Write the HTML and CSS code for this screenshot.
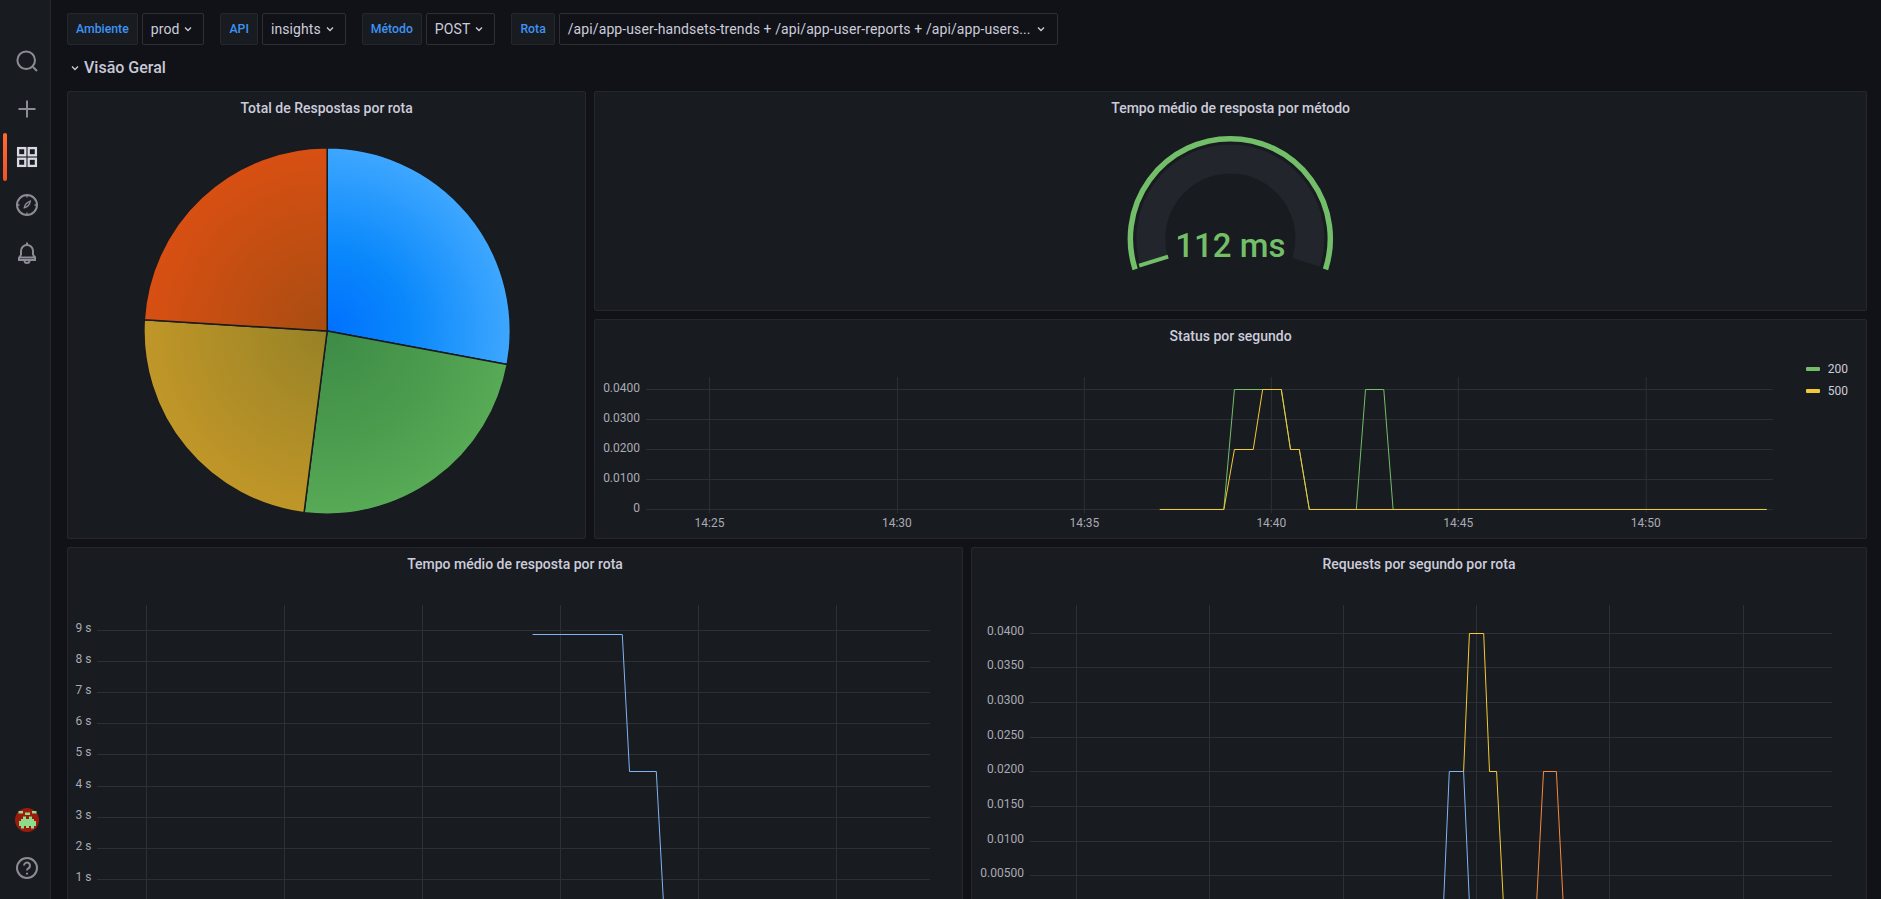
FILE: index.html
```html
<!DOCTYPE html>
<html lang="pt">
<head>
<meta charset="utf-8">
<title>Visão Geral</title>
<link rel="stylesheet" href="styles.css">
</head>
<body>
<nav class="sidebar">
  <div class="nav-top">
    <a class="nav-item">
      <svg class="icon" viewBox="0 0 24 24"><circle cx="11.2" cy="11.2" r="8.8"/><path d="M18 18l4 4"/></svg>
    </a>
    <a class="nav-item">
      <svg class="icon" viewBox="0 0 24 24"><path d="M12 3.500v17M3.500 12h17"/></svg>
    </a>
    <a class="nav-item active">
      <svg class="icon" viewBox="0 0 24 24"><rect x="3.100" y="3.100" width="7.200" height="7.200"/><rect x="13.700" y="3.100" width="7.200" height="7.200"/><rect x="3.100" y="13.700" width="7.200" height="7.200"/><rect x="13.700" y="13.700" width="7.200" height="7.200"/></svg>
    </a>
    <a class="nav-item">
      <svg class="icon" viewBox="0 0 24 24"><circle cx="12" cy="12" r="10"/><path d="M9.300 14.700c.5-2.800 2-5 6-6.500-.6 3.800-2.600 5.800-6 6.500z" class="thin"/><path d="M12 2v2.500M12 19.500V22M2 12h2.500M19.500 12H22" class="thin"/></svg>
    </a>
    <a class="nav-item">
      <svg class="icon" viewBox="0 0 24 24"><path d="M12 1.500v2.500M6 14v-4a6 6 0 0 1 12 0v4M6 14l-2 2.800v2.200h16v-2.800L18 14M4 16.500h16M9.500 19.500a2.500 2.500 0 0 0 5 0"/></svg>
    </a>
  </div>
  <div class="nav-bottom">
    <a class="nav-item">
      <svg class="avatar" viewBox="0 0 24 24">
        <circle class="avatar-bg" cx="12" cy="12" r="12"/>
        <path class="avatar-fg" d="M3.500 3h4.500v2.500h-4.500zM10 4.500h5v2.500h-5zM17 3h4.500v2.500h-4.500zM4 13h2v-2h2v-2.500h3v2.500h3v-2.500h3v2.500h2v2h2v5h-2v2.500h-3v-2.500h-2v2h-3v-2h-2v2.500h-3v-2.500h-2z"/>
      </svg>
    </a>
    <a class="nav-item">
      <svg class="icon" viewBox="0 0 24 24"><circle cx="12" cy="12" r="10"/><path d="M9 9.600a3 3 0 1 1 4.600 2.500c-1 .6-1.600 1.100-1.600 2.300"/><path d="M12 16.800v1.800"/></svg>
    </a>
  </div>
</nav>

<main class="main">
  <div class="toolbar">
    <div class="var-group">
      <span class="var-label">Ambiente</span>
      <span class="var-select">prod<svg class="chev" viewBox="0 0 8 6"><path d="M1 1.500l3 3 3-3"/></svg></span>
    </div>
    <div class="var-group">
      <span class="var-label">API</span>
      <span class="var-select">insights<svg class="chev" viewBox="0 0 8 6"><path d="M1 1.500l3 3 3-3"/></svg></span>
    </div>
    <div class="var-group">
      <span class="var-label">Método</span>
      <span class="var-select">POST<svg class="chev" viewBox="0 0 8 6"><path d="M1 1.500l3 3 3-3"/></svg></span>
    </div>
    <div class="var-group">
      <span class="var-label">Rota</span>
      <span class="var-select route-select">/api/app-user-handsets-trends + /api/app-user-reports + /api/app-users...<svg class="chev" viewBox="0 0 8 6"><path d="M1 1.500l3 3 3-3"/></svg></span>
    </div>
  </div>

  <h2 class="row-title"><svg class="chev" viewBox="0 0 8 6"><path d="M1 1.500l3 3 3-3"/></svg>Visão Geral</h2>

  <div class="dash-grid">
    <section class="panel pie-panel">
      <h3 class="panel-title">Total de Respostas por rota</h3>
      <svg class="chart pie-chart" viewBox="68 124 517 414">
        <defs>
          <radialGradient id="g-blue" gradientUnits="userSpaceOnUse" cx="327" cy="331" r="183">
            <stop offset="0" stop-color="#0070ff"/><stop offset=".45" stop-color="#0a88fb"/><stop offset="1" stop-color="#3ea7ff"/>
          </radialGradient>
          <radialGradient id="g-green" gradientUnits="userSpaceOnUse" cx="327" cy="331" r="183">
            <stop offset="0" stop-color="#3d8b47"/><stop offset=".6" stop-color="#4c9c4e"/><stop offset="1" stop-color="#57aa56"/>
          </radialGradient>
          <radialGradient id="g-yellow" gradientUnits="userSpaceOnUse" cx="327" cy="331" r="183">
            <stop offset="0" stop-color="#978226"/><stop offset="1" stop-color="#c09628"/>
          </radialGradient>
          <radialGradient id="g-orange" gradientUnits="userSpaceOnUse" cx="327" cy="331" r="183">
            <stop offset="0" stop-color="#a84d12"/><stop offset="1" stop-color="#d84f12"/>
          </radialGradient>
        </defs>
        <path class="slice" fill="url(#g-blue)" d="M327 331V147.800A183.200 183.200 0 0 1 507.100 364.400z"/>
        <path class="slice" fill="url(#g-green)" d="M327 331L507.100 364.400A183.200 183.200 0 0 1 303.900 512.700z"/>
        <path class="slice" fill="url(#g-yellow)" d="M327 331L303.900 512.700A183.200 183.200 0 0 1 144.100 319.800z"/>
        <path class="slice" fill="url(#g-orange)" d="M327 331L144.100 319.800A183.200 183.200 0 0 1 327 147.800z"/>
      </svg>
    </section>

    <section class="panel gauge-panel">
      <h3 class="panel-title">Tempo médio de resposta por método</h3>
      <svg class="chart" viewBox="595 124 1271 186">
        <path class="gauge-track" d="M1154.700 262.500A79.500 79.500 0 1 1 1306.300 262.500"/>
        <path class="gauge-threshold" d="M1135.300 269.300A100 100 0 1 1 1325.700 269.300"/>
        <path class="gauge-value" d="M1139.300 265.700L1168.300 256.700"/>
        <text class="gauge-text" x="1230.500" y="257.500">112 ms</text>
      </svg>
    </section>

    <section class="panel status-panel">
      <h3 class="panel-title">Status por segundo</h3>
      <div class="chart-wrap">
        <svg class="chart" viewBox="595 352 1271 186">
          <path class="grid" d="M646 389.500H1773M646 419.500H1773M646 449.500H1773M646 479.500H1773M646 509.500H1773M709.500 377V513M897.500 377V513M1084.500 377V513M1271.500 377V513M1458.500 377V513M1646.500 377V513"/>
          <g class="axis-y">
            <text x="640" y="392">0.0400</text>
            <text x="640" y="422">0.0300</text>
            <text x="640" y="452">0.0200</text>
            <text x="640" y="482">0.0100</text>
            <text x="640" y="512">0</text>
          </g>
          <g class="axis-x">
            <text x="709.500" y="527">14:25</text>
            <text x="897" y="527">14:30</text>
            <text x="1084.500" y="527">14:35</text>
            <text x="1271.500" y="527">14:40</text>
            <text x="1458.500" y="527">14:45</text>
            <text x="1646" y="527">14:50</text>
          </g>
          <path class="series s-green" d="M1160 509.500H1224L1234.600 389.500H1281.500L1290.700 449.500H1299.500L1309.500 509.500H1356.500L1365.700 389.500H1384L1393.300 509.500H1767"/>
          <path class="series s-yellow" d="M1160 509.500H1224L1234.600 449.500H1253.400L1262.800 389.500H1281.500L1290.700 449.500H1299.500L1309.500 509.500H1767"/>
        </svg>
        <ul class="legend">
          <li class="legend-item"><i class="swatch swatch-green"></i>200</li>
          <li class="legend-item"><i class="swatch swatch-yellow"></i>500</li>
        </ul>
      </div>
    </section>

    <section class="panel latency-panel">
      <h3 class="panel-title">Tempo médio de resposta por rota</h3>
      <svg class="chart" viewBox="68 580 894 414">
        <path class="grid" d="M97 630.500H930M97 661.500H930M97 692.500H930M97 723.500H930M97 754.500H930M97 786.500H930M97 817.500H930M97 848.500H930M97 879.500H930M146.500 605V915M284.500 605V915M422.500 605V915M560.500 605V915M698.500 605V915M836.500 605V915"/>
        <g class="axis-y">
          <text x="91.500" y="632">9 s</text>
          <text x="91.500" y="663">8 s</text>
          <text x="91.500" y="694">7 s</text>
          <text x="91.500" y="725">6 s</text>
          <text x="91.500" y="756">5 s</text>
          <text x="91.500" y="788">4 s</text>
          <text x="91.500" y="819">3 s</text>
          <text x="91.500" y="850">2 s</text>
          <text x="91.500" y="881">1 s</text>
        </g>
        <path class="series s-blue" d="M532.600 634.500H622.300L629.500 771.500H656.300L663.600 905"/>
      </svg>
    </section>

    <section class="panel rps-panel">
      <h3 class="panel-title">Requests por segundo por rota</h3>
      <svg class="chart" viewBox="972 580 894 414">
        <path class="grid" d="M1030 633.500H1832M1030 667.500H1832M1030 702.500H1832M1030 737.500H1832M1030 771.500H1832M1030 806.500H1832M1030 841.500H1832M1030 875.500H1832M1076.500 605V915M1209.500 605V915M1343.500 605V915M1476.500 605V915M1609.500 605V915M1743.500 605V915"/>
        <g class="axis-y">
          <text x="1024" y="635">0.0400</text>
          <text x="1024" y="669">0.0350</text>
          <text x="1024" y="704">0.0300</text>
          <text x="1024" y="739">0.0250</text>
          <text x="1024" y="773">0.0200</text>
          <text x="1024" y="808">0.0150</text>
          <text x="1024" y="843">0.0100</text>
          <text x="1024" y="877">0.00500</text>
        </g>
        <path class="series s-blue" d="M1443.500 905L1449.300 771.500H1463.600L1469.500 905"/>
        <path class="series s-orange" d="M1536.500 905L1543.500 771.500H1556.400L1563.300 905"/>
        <path class="series s-yellow" d="M1463.600 771.500L1469.400 633.500H1483.700L1489.500 771.500H1496.600L1503.500 905"/>
      </svg>
    </section>
  </div>
</main>
</body>
</html>
```
FILE: styles.css
```css
* { box-sizing: border-box; }

html, body {
  height: 100%;
  margin: 0;
}

body {
  display: flex;
  overflow: hidden;
  background: #111217;
  color: #ccccdc;
  font-family: Roboto, "Liberation Sans", sans-serif;
  font-size: 14px;
}

/* Sidebar */
.sidebar {
  flex: 0 0 51px;
  height: 899px;
  display: flex;
  flex-direction: column;
  justify-content: space-between;
  background: #181b1f;
  border-right: 1px solid #24272b;
}

.nav-top { padding-top: 36px; }
.nav-bottom { padding-bottom: 7px; }

.nav-item {
  position: relative;
  display: flex;
  align-items: center;
  justify-content: center;
  height: 48px;
  padding-left: 4px;
}

.nav-item:first-child { height: 49px; }

.nav-item.active::before {
  content: "";
  position: absolute;
  left: 3px;
  top: 0;
  width: 4px;
  height: 48px;
  border-radius: 2px;
  background: linear-gradient(180deg, #ff6a30, #f0532c);
}

.icon {
  width: 24px;
  height: 24px;
  fill: none;
  stroke: #8b8c96;
  stroke-width: 2;
}

.icon .thin { stroke-width: 1.4; }

.active .icon {
  stroke: #d8d9e3;
  stroke-width: 2.300;
}

.avatar {
  width: 24px;
  height: 24px;
}

.avatar-bg { fill: #9c1a0c; }
.avatar-fg { fill: #8edb8c; }

/* Toolbar */
.main {
  flex: 1;
  min-width: 0;
  padding: 13px 14px 0 16px;
}

.toolbar {
  display: flex;
  gap: 16px;
}

.var-group {
  display: flex;
  gap: 4px;
}

.var-label,
.var-select {
  display: flex;
  align-items: center;
  height: 32px;
  border-radius: 2px;
  white-space: nowrap;
}

.var-label {
  padding: 0 8px;
  background: #181b1f;
  border: 1px solid #24272b;
  color: #3d93f5;
  font-size: 12.250px;
  font-weight: 500;
}

.var-select {
  padding: 0 11px 0 8px;
  background: #111217;
  border: 1px solid #2c2f34;
  color: #ccccdc;
  letter-spacing: .1px;
}

.route-select { padding-right: 12px; }
.route-select .chev { margin-left: 6px; }

.chev {
  flex: none;
  width: 8px;
  height: 6px;
  margin-left: 5px;
  fill: none;
  stroke: #ccccdc;
  stroke-width: 1.300;
}

/* Row heading */
.row-title {
  display: flex;
  align-items: center;
  height: 30px;
  margin: 8px 0;
  padding-left: 4px;
  color: #c8c9d6;
  font-size: 16px;
  font-weight: 500;
  line-height: 30px;
}

.row-title .chev {
  margin: 0 5px 0 0;
}

/* Dashboard grid */
.dash-grid {
  display: grid;
  grid-template-columns: repeat(24, 1fr);
  grid-auto-rows: 220px;
  gap: 8px;
}

.panel {
  display: flex;
  flex-direction: column;
  min-width: 0;
  background: #181b1f;
  border: 1px solid #24272b;
  border-radius: 2px;
}

.pie-panel { grid-column: 1 / 8; grid-row: 1 / 3; }
.gauge-panel { grid-column: 8 / 25; grid-row: 1; }
.status-panel { grid-column: 8 / 25; grid-row: 2; }
.latency-panel { grid-column: 1 / 13; grid-row: 3 / 5; }
.rps-panel { grid-column: 13 / 25; grid-row: 3 / 5; }

.panel-title {
  flex: none;
  height: 32px;
  margin: 0;
  font-size: 14px;
  font-weight: 500;
  line-height: 32px;
  text-align: center;
}

.chart-wrap {
  position: relative;
  flex: 1;
  min-height: 0;
}

.chart {
  display: block;
  width: 100%;
  flex: 1;
  min-height: 0;
}

.chart-wrap .chart { height: 100%; }

/* Pie */
.slice {
  stroke: #181b1f;
  stroke-width: 1.500;
  stroke-linejoin: round;
}

/* Gauge */
.gauge-track {
  fill: none;
  stroke: #22252b;
  stroke-width: 29;
}

.gauge-threshold {
  fill: none;
  stroke: #73bf69;
  stroke-width: 5.500;
}

.gauge-value {
  fill: none;
  stroke: #73bf69;
  stroke-width: 4;
}

.gauge-text {
  fill: #73bf69;
  font-family: Roboto, "Liberation Sans", sans-serif;
  font-size: 33px;
  font-weight: 500;
  text-anchor: middle;
}

/* Time series */
.grid {
  fill: none;
  stroke: #2d3035;
  stroke-width: 1;
}

.axis-y text,
.axis-x text {
  fill: #a9aab4;
  font-family: Roboto, "Liberation Sans", sans-serif;
  font-size: 12px;
}

.axis-y text { text-anchor: end; }
.axis-x text { text-anchor: middle; }

.series {
  fill: none;
  stroke-width: 1;
}

.s-green { stroke: #73bf69; }
.s-yellow { stroke: #f5c936; }
.s-blue { stroke: #7fb5f5; }
.s-orange { stroke: #f58a3c; }

/* Legend */
.legend {
  position: absolute;
  top: 6px;
  right: 18px;
  margin: 0;
  padding: 0;
  list-style: none;
  font-size: 12px;
}

.legend-item {
  display: flex;
  align-items: center;
  height: 22px;
}

.swatch {
  width: 14px;
  height: 4px;
  margin-right: 8px;
  border-radius: 1px;
}

.swatch-green { background: #73bf69; }
.swatch-yellow { background: #f5c936; }
```
